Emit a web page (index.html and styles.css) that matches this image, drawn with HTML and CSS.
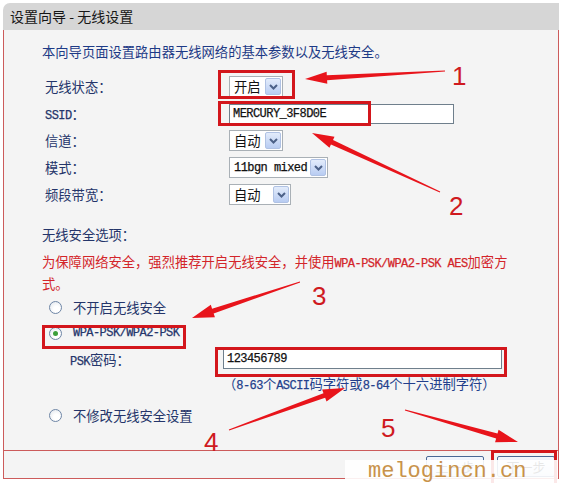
FILE: index.html
```html
<!DOCTYPE html>
<html lang="zh-CN">
<head>
  <meta charset="UTF-8">
  <title>设置向导 - 无线设置</title>
  <link rel="stylesheet" href="styles.css">
</head>
<body>

  <div class="wizard">
    <div class="title">设置向导 - 无线设置</div>

    <div class="panel">
      <p class="intro">本向导页面设置路由器无线网络的基本参数以及无线安全。</p>

      <div class="rows">
        <div class="row">
          <span class="label">无线状态：</span>
          <span class="sel w54"><span class="val">开启</span><span class="drop"><svg width="9" height="6" viewBox="0 0 9 6"><polyline points="1,1 4.5,4.5 8,1" /></svg></span></span>
        </div>
        <div class="row">
          <span class="label"><span class="en">SSID</span>：</span>
          <span class="field ssid"><span class="en">MERCURY_3F8D0E</span></span>
        </div>
        <div class="row">
          <span class="label">信道：</span>
          <span class="sel w54"><span class="val">自动</span><span class="drop"><svg width="9" height="6" viewBox="0 0 9 6"><polyline points="1,1 4.5,4.5 8,1" /></svg></span></span>
        </div>
        <div class="row">
          <span class="label">模式：</span>
          <span class="sel w99"><span class="val en">11bgn mixed</span><span class="drop"><svg width="9" height="6" viewBox="0 0 9 6"><polyline points="1,1 4.5,4.5 8,1" /></svg></span></span>
        </div>
        <div class="row">
          <span class="label">频段带宽：</span>
          <span class="sel w62"><span class="val">自动</span><span class="drop"><svg width="9" height="6" viewBox="0 0 9 6"><polyline points="1,1 4.5,4.5 8,1" /></svg></span></span>
        </div>
      </div>

      <p class="section">无线安全选项：</p>
      <p class="warn">为保障网络安全，强烈推荐开启无线安全，并使用<span class="en">WPA-PSK/WPA2-PSK AES</span>加密方<br>式。</p>

      <div class="radio"><span class="dot"></span>不开启无线安全</div>
      <div class="radio"><span class="dot on"></span><span class="en">WPA-PSK/WPA2-PSK</span></div>
      <div class="psk">
        <span class="psk-label"><span class="en">PSK</span>密码：</span>
        <span class="field pass"><span class="en">123456789</span></span>
      </div>
      <p class="hint">（<span class="en">8-63</span>个<span class="en">ASCII</span>码字符或<span class="en">8-64</span>个十六进制字符）</p>
      <div class="radio last"><span class="dot"></span>不修改无线安全设置</div>
    </div>

    <div class="footer">
      <button class="btn">上一步</button>
      <button class="btn">下一步</button>
    </div>
  </div>

  <!-- annotations drawn over the screenshot -->
  <svg class="marks" width="565" height="483" viewBox="0 0 565 483">
    <g class="box">
      <rect x="219.5" y="71.5" width="74" height="26" />
      <rect x="219.5" y="102.5" width="150" height="22" />
      <rect x="43.5" y="326.5" width="141" height="21" />
      <rect x="216.5" y="348.5" width="289" height="27" />
      <rect x="492.5" y="451.5" width="63" height="35" />
    </g>
    <g class="arrow">
      <polygon points="444.97,70.5 326.82,75.25 326.62,71.76 305,79 327.3,83.74 327.1,80.25 445.03,71.5" />
      <polygon points="440.21,191.55 333.03,139.94 334.49,136.76 312,133 329.47,147.66 330.93,144.48 439.79,192.45" />
      <polygon points="299.84,281.53 212.08,308.67 210.82,304.87 192,318 214.93,317.21 213.66,313.41 300.16,282.47" />
      <polygon points="229.17,430.47 325.16,397.84 326.52,401.6 345,388 322.1,389.38 323.46,393.14 228.83,429.53" />
      <polygon points="404.86,410.48 496.15,438.41 495.06,442.25 518,442 498.6,429.75 497.51,433.59 405.14,409.52" />
    </g>
    <g class="num">
      <text x="452" y="85">1</text>
      <text x="449" y="215">2</text>
      <text x="312" y="305">3</text>
      <text x="204" y="451">4</text>
      <text x="381" y="437">5</text>
    </g>
  </svg>

  <div class="watermark">melogincn.cn</div>

</body>
</html>
```

FILE: styles.css
```css
body {
  margin: 0;
  background: #fff;
  font-family: "Noto Sans CJK SC", sans-serif;
  font-size: 13.3px;
  color: #24356a;
}

p {
  margin: 0;
}

/* ascii runs: half-width serif glyphs like the router's font */
.en {
  font-family: "Liberation Mono", monospace;
  font-size: 12px;
  letter-spacing: -0.55px;
  -webkit-text-stroke: 0.25px currentColor;
}

.wizard {
  width: 556px;
  margin: 3px 0 0 3px;
}

.title {
  height: 27px;
  line-height: 27px;
  background: #d6d6d6;
  border-radius: 7px 0 0 0;
  padding-left: 7px;
  font-size: 14px;
  color: #151515;
}

.panel {
  box-sizing: border-box;
  height: 421px;
  padding: 12px 0 0 38px;
  background: #f4f4f4;
  border: 1px solid #cc5b5b;
  border-top: none;
}

.intro {
  line-height: 20px;
  color: #1d3a86;
}

.rows {
  margin-top: 11px;
}

.row {
  display: flex;
  align-items: center;
  height: 27px;
  padding-left: 3px;
}

.label {
  width: 184px;
  flex: none;
}

/* fake select boxes */
.sel {
  display: inline-flex;
  align-items: center;
  box-sizing: border-box;
  height: 21px;
  background: #fff;
  border: 1px solid #a9b0b6;
  color: #111;
}

.w54 { width: 54px; }
.w62 { width: 62px; }
.w99 { width: 99px; }

.val {
  flex: 1;
  padding-left: 4px;
  white-space: nowrap;
}

.drop {
  display: flex;
  align-items: center;
  justify-content: center;
  box-sizing: border-box;
  width: 16px;
  height: 17px;
  margin-right: 1px;
  background: linear-gradient(#e3ecfb, #b8ccf2);
  border: 1px solid #b0c2e4;
  border-radius: 2px;
}

.drop svg polyline {
  fill: none;
  stroke: #4c6188;
  stroke-width: 2;
}

.field {
  display: flex;
  align-items: center;
  box-sizing: border-box;
  height: 20px;
  padding-left: 3px;
  background: #fff;
  border: 1px solid #6f7f8c;
  color: #111;
}

.ssid {
  width: 225px;
}

.section {
  margin-top: 17px;
  line-height: 20px;
}

.warn {
  margin-top: 7px;
  line-height: 20px;
  color: #d3252a;
  white-space: nowrap;
}

.radio {
  display: flex;
  align-items: center;
  height: 26px;
  padding-left: 7px;
}

.radio:first-of-type {
  margin-top: 5px;
}

.radio.last {
  margin-top: 6px;
}

.dot {
  display: flex;
  align-items: center;
  justify-content: center;
  box-sizing: border-box;
  width: 13px;
  height: 13px;
  margin-right: 11px;
  border: 1px solid #6f86a6;
  border-radius: 50%;
  background: radial-gradient(circle at 60% 65%, #fff 30%, #dde3ea 100%);
}

.dot.on::after {
  content: "";
  width: 5px;
  height: 5px;
  border-radius: 50%;
  background: #3c9f3a;
}

.psk {
  display: flex;
  align-items: center;
  height: 26px;
  padding-left: 28px;
}

.psk-label {
  width: 153px;
  flex: none;
}

.pass {
  width: 279px;
}

.hint {
  margin-top: 2px;
  padding-left: 181px;
  line-height: 20px;
  color: #233f8c;
  white-space: nowrap;
}

.footer {
  display: flex;
  justify-content: flex-end;
  gap: 13px;
  box-sizing: border-box;
  height: 28px;
  padding: 5px 3px 0 0;
  background: #f4f4f4;
  border: 1px solid #cc5b5b;
  border-top: none;
}

.btn {
  width: 58px;
  height: 21px;
  padding: 0;
  font-family: "Noto Sans CJK SC", sans-serif;
  font-size: 13px;
  color: #111;
  background: linear-gradient(#f3f7fd, #d3e0f4);
  border: 1px solid #4a6896;
  border-radius: 2px;
}

.marks {
  position: absolute;
  top: 0;
  left: 0;
  pointer-events: none;
}

.marks .box rect {
  fill: none;
  stroke: #d3161c;
  stroke-width: 3;
}

.marks .arrow polygon {
  fill: #e8141b;
}

.marks .num text {
  font-family: "Liberation Sans", sans-serif;
  font-size: 26px;
  fill: #cf1a1f;
}

.watermark {
  position: absolute;
  left: 345px;
  top: 460px;
  width: 213px;
  height: 23px;
  padding-left: 23px;
  box-sizing: border-box;
  background: rgba(255, 255, 255, 0.9);
  font-family: "Liberation Mono", monospace;
  font-size: 22px;
  line-height: 24px;
  color: #c8924a;
}
```
